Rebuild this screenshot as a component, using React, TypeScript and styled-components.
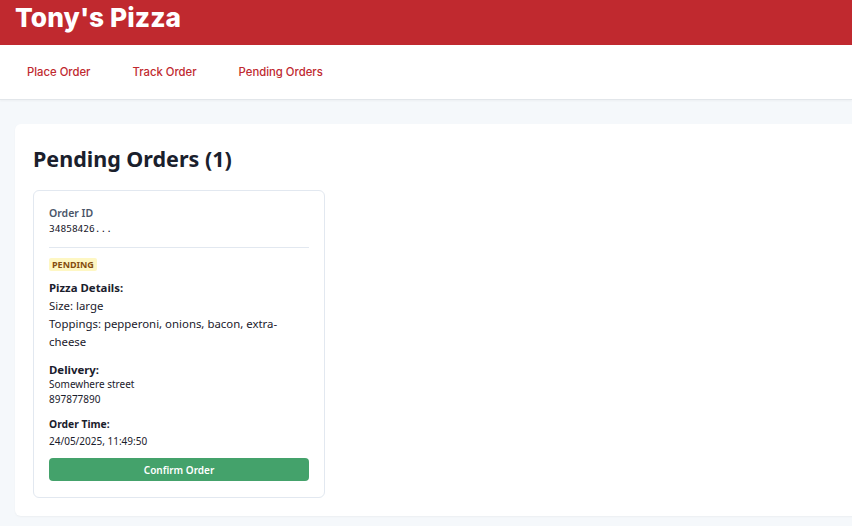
import React from "react";
import styled, { createGlobalStyle } from "styled-components";

const Global = createGlobalStyle`
  html, body { margin: 0; padding: 0; }
  body {
    font-family: "Noto Sans", "Open Sans", sans-serif;
    background: #f5f8fb;
    overflow: hidden;
  }
  * { box-sizing: border-box; }
`;

const Page = styled.div`
  width: 852px;
  height: 526px;
  overflow: hidden;
  background: #f5f8fb;
`;

const Header = styled.header`
  display: flex;
  align-items: center;
  width: calc(100% + 60px);
  height: 45px;
  padding: 0 15px;
  background: #c0292f;
  color: #fff;
`;

const Brand = styled.h1`
  margin: 0;
  margin-top: -10px;
  font-family: "Inter", sans-serif;
  font-weight: 800;
  font-size: 26.3px;
  letter-spacing: 0.1px;
`;

const HeaderLink = styled.span`
  margin-left: auto;
  font-family: "Inter", sans-serif;
  font-weight: 600;
  font-size: 12px;
  margin-top: -12px;
`;

const Nav = styled.nav`
  display: flex;
  align-items: center;
  gap: 42px;
  height: 55px;
  padding: 0 27px;
  background: #fff;
  border-bottom: 1px solid #e2e6ea;
  box-shadow: 0 1px 2px rgba(0, 0, 0, 0.04);
`;

const NavLink = styled.a`
  font-family: "Inter", sans-serif;
  font-weight: 500;
  font-size: 11.3px;
  color: #c0292f;
  text-decoration: none;
`;

const Main = styled.main`
  padding: 24px 0 0 15px;
`;

const Panel = styled.section`
  width: calc(100% + 20px);
  height: 392px;
  padding: 22px 18px;
  background: #fff;
  border-radius: 6px;
  box-shadow: 0 1px 2px rgba(0, 0, 0, 0.04);
`;

const Title = styled.h2`
  margin: 0 0 18px;
  font-family: "Noto Sans", sans-serif;
  font-weight: 700;
  font-size: 21.5px;
  line-height: 26px;
  color: #1a202c;
`;

const Card = styled.article`
  width: 292px;
  padding: 14px 15px 16px;
  border: 1px solid #e2e8f0;
  border-radius: 6px;
  color: #1a202c;
`;

const IdLabel = styled.div`
  font-size: 10.5px;
  font-weight: 600;
  color: #4a5568;
  line-height: 16px;
`;

const IdValue = styled.div`
  font-family: "DejaVu Sans Mono", monospace;
  font-size: 9.5px;
  line-height: 16px;
  color: #1a202c;
`;

const Divider = styled.hr`
  margin: 10px 0 10px;
  border: none;
  border-top: 1px solid #e2e8f0;
`;

const Badge = styled.div`
  width: fit-content;
  padding: 0 3px;
  background: #fef7c3;
  color: #854d0e;
  font-size: 9px;
  font-weight: 700;
  line-height: 13px;
  border-radius: 2px;
`;

const Section = styled.div<{ $gap?: number }>`
  margin-top: ${(p) => p.$gap ?? 8}px;
`;

const Label = styled.div<{ $size?: number; $lh?: number }>`
  font-weight: 700;
  font-size: ${(p) => p.$size ?? 11.4}px;
  line-height: ${(p) => p.$lh ?? 18}px;
  color: #1a202c;
`;

const Text = styled.div<{ $size?: number; $lh?: number }>`
  font-size: ${(p) => p.$size ?? 11.4}px;
  line-height: ${(p) => p.$lh ?? 18}px;
  color: #1a202c;
`;

const Button = styled.button`
  display: block;
  width: 100%;
  height: 23px;
  margin-top: 9px;
  border: none;
  border-radius: 4px;
  background: #44a26b;
  color: #fff;
  font-family: "Noto Sans", sans-serif;
  font-weight: 600;
  font-size: 10px;
  cursor: pointer;
`;

export default function App() {
  return (
    <Page>
      <Global />
      <Header>
        <Brand>Tony's Pizza</Brand>
        <HeaderLink>Admin</HeaderLink>
      </Header>
      <Nav>
        <NavLink>Place Order</NavLink>
        <NavLink>Track Order</NavLink>
        <NavLink>Pending Orders</NavLink>
      </Nav>
      <Main>
        <Panel>
          <Title>Pending Orders (1)</Title>
          <Card>
            <IdLabel>Order ID</IdLabel>
            <IdValue>34858426...</IdValue>
            <Divider />
            <Badge>PENDING</Badge>
            <Section $gap={8}>
              <Label>Pizza Details:</Label>
              <Text>Size: large</Text>
              <Text>Toppings: pepperoni, onions, bacon, extra-cheese</Text>
            </Section>
            <Section $gap={11}>
              <Label $lh={15}>Delivery:</Label>
              <Text $size={10} $lh={15}>Somewhere street</Text>
              <Text $size={10} $lh={15}>897877890</Text>
            </Section>
            <Section $gap={8}>
              <Label $size={10.3}>Order Time:</Label>
              <Text $size={10} $lh={16}>24/05/2025, 11:49:50</Text>
            </Section>
            <Button>Confirm Order</Button>
          </Card>
        </Panel>
      </Main>
    </Page>
  );
}
